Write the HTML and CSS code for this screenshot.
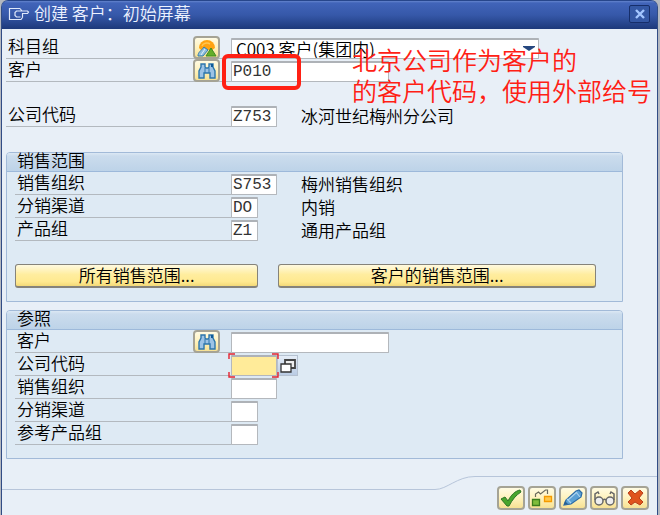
FILE: index.html
```html
<!DOCTYPE html>
<html lang="zh-CN">
<head>
<meta charset="utf-8">
<title>创建 客户: 初始屏幕</title>
<link rel="stylesheet" href="styles.css">
</head>
<body>
<svg class="defs" aria-hidden="true">
  <symbol id="binoculars" viewBox="0 0 20 18">
    <path d="M4 2h4v3l1 1h2l1-1V2h4v3l2 4v7h-5v-5H7v5H2V9l2-4z" fill="#9cc3e6" stroke="#2c76ac" stroke-width="1.4"/>
    <path d="M8 6v5M12 6v5" stroke="#2c76ac"/>
    <path d="M14 2h2v3h-2z" fill="#0e5a98"/>
  </symbol>
</svg>
<div class="window">
  <header class="titlebar">
    <svg class="title-icon" viewBox="0 0 22 14" fill="none" stroke="#dfe8fa" stroke-width="1.2" aria-hidden="true">
      <path d="M12 1.500H1.500v11H13l1.500-2M12 1.500L14 4h5.500l1 1-1 1.500H14M14.500 6.500v4M14 4H8.500L7 5.500v3L8.500 10h4"/>
    </svg>
    <h1>创建 客户：初始屏幕</h1>
    <button class="close" type="button" aria-label="关闭">
      <svg viewBox="0 0 12 10"><path d="M2 1l8 8M10 1L2 9" stroke="#a3c6ff" stroke-width="2.4"/></svg>
    </button>
  </header>

  <main>
    <section class="top">
      <div class="row">
        <div class="name"><label for="group">科目组</label>
          <button class="icon-btn" type="button" aria-label="科目组概览">
            <svg viewBox="0 0 20 18">
              <path d="M2 9a8 8 0 0 1 16 0l-3 2H4z" fill="#ffa311"/>
              <path d="M5 7a5 4 0 0 1 8-2" fill="none" stroke="#ffc650" stroke-width="1.5"/>
              <path d="M1 17c0-4 3-5 6-9l4 3-5 6z" fill="#8fbddd" stroke="#337da9"/>
              <path d="M4 16l4-6" stroke="#e0f0fa"/>
              <path d="M9 17l5-8 5 8z" fill="#65ae29" stroke="#3d8c23"/>
            </svg>
          </button>
        </div>
        <div class="select-box">
          <select id="group"><option>C003 客户(集团内)</option></select>
          <svg viewBox="0 0 12 6" aria-hidden="true"><path d="M0 0h12v1L6 5 0 1z" fill="#26477f"/></svg>
        </div>
      </div>
      <div class="row">
        <div class="name"><label for="customer">客户</label>
          <button class="icon-btn" type="button" aria-label="查找客户"><svg><use href="#binoculars"/></svg></button>
        </div>
        <div class="marked"><input id="customer" class="wide" value="P010"></div>
      </div>
      <div class="row spaced">
        <div class="name"><label for="company">公司代码</label></div>
        <input id="company" class="four" value="Z753">
        <span class="desc">冰河世纪梅州分公司</span>
      </div>
      <p class="note">北京公司作为客户的<br>的客户代码，使用外部给号</p>
    </section>

    <section class="panel">
      <h2>销售范围</h2>
      <div class="row">
        <div class="name"><label for="org">销售组织</label></div>
        <input id="org" class="four" value="S753">
        <span class="desc">梅州销售组织</span>
      </div>
      <div class="row">
        <div class="name"><label for="channel">分销渠道</label></div>
        <input id="channel" class="two" value="DO">
        <span class="desc">内销</span>
      </div>
      <div class="row">
        <div class="name"><label for="division">产品组</label></div>
        <input id="division" class="two" value="Z1">
        <span class="desc">通用产品组</span>
      </div>
      <div class="actions">
        <button type="button">所有销售范围...</button>
        <button type="button">客户的销售范围...</button>
      </div>
    </section>

    <section class="panel">
      <h2>参照</h2>
      <div class="row">
        <div class="name"><label for="ref-customer">客户</label>
          <button class="icon-btn" type="button" aria-label="查找参照客户"><svg><use href="#binoculars"/></svg></button>
        </div>
        <input id="ref-customer" class="wide">
      </div>
      <div class="row">
        <div class="name"><label for="ref-company">公司代码</label></div>
        <div class="focused">
          <input id="ref-company" class="four">
          <svg class="corners" viewBox="0 0 51 25" fill="none" stroke="#e5232f" stroke-width="1.4" aria-hidden="true">
            <path d="M1 6V1h6M44 1h6v5M50 19v5h-6M7 24H1v-5"/>
          </svg>
        </div>
        <button class="match" type="button" aria-label="选择公司代码">
          <svg viewBox="0 0 16 14"><path d="M5 1h10v8H5z" fill="#eee" stroke="#444" stroke-width="1.8"/><path d="M1 5h10v8H1z" fill="#fff" stroke="#333" stroke-width="1.3"/></svg>
        </button>
      </div>
      <div class="row">
        <div class="name"><label for="ref-org">销售组织</label></div>
        <input id="ref-org" class="four">
      </div>
      <div class="row">
        <div class="name"><label for="ref-channel">分销渠道</label></div>
        <input id="ref-channel" class="two">
      </div>
      <div class="row">
        <div class="name"><label for="ref-division">参考产品组</label></div>
        <input id="ref-division" class="two">
      </div>
    </section>
  </main>

  <footer>
    <div class="line-low"></div>
    <svg class="curve" viewBox="0 0 40 14" fill="none" stroke="#b7c5da" aria-hidden="true"><path d="M0 13.500C12 13.500 22 .5 40 .5"/></svg>
    <div class="tools">
      <button class="tool" type="button" aria-label="确认">
        <svg viewBox="0 0 24 20"><path d="M2 11l4-2 3 4C12 7 16 3 21 2l1 2C17 7 13 12 10 18H8z" fill="#49a52c" stroke="#2f7527"/></svg>
      </button>
      <button class="tool" type="button" aria-label="销售范围">
        <svg viewBox="0 0 24 20"><path d="M2.500 11.500h7v6h-7z" fill="#7fbd3a" stroke="#3c7d1c" stroke-width="1.300"/><path d="M14.500 8.500h7v5h-7z" fill="#ffc84a" stroke="#f59a00" stroke-width="1.300"/><path d="M5.500 9V6l3-2 2 2 5-4h2v4" fill="none" stroke="#6a6a5c" stroke-width="1.200"/></svg>
      </button>
      <button class="tool" type="button" aria-label="编辑">
        <svg viewBox="0 0 24 20"><path d="M3 17l2-5L15 3l3-1 3 3-1 4-10 7z" fill="#5aa0d4" stroke="#2c6ba6" stroke-width="1.200"/><path d="M7 12l9-8M15 4l4 5M6 11l4 4" stroke="#a9d2ee" stroke-width="1.200"/><path d="M3 17l1-4 3 3z" fill="#295f91"/></svg>
      </button>
      <button class="tool" type="button" aria-label="显示">
        <svg viewBox="0 0 24 20" fill="none" stroke="#666" stroke-width="1.500"><circle cx="7" cy="13" r="4" fill="#eee"/><circle cx="18" cy="13" r="4" fill="#eee"/><path d="M11 12q1.500-1.500 3 0M3 12V6l3-2 1 2M22 12V6l-3-2-1 2"/></svg>
      </button>
      <button class="tool" type="button" aria-label="取消">
        <svg viewBox="0 0 24 20"><path d="M5 5l3-3 4 4 5-4 3 3-4 5 4 4-3 3-5-3-4 3-3-3 4-4z" fill="#e0541d" stroke="#b8401a"/></svg>
      </button>
    </div>
  </footer>
</div>
</body>
</html>
```
FILE: styles.css
```css
*, *::after { box-sizing: border-box; }

body {
  margin: 0;
  background: #b4b8c0;
  color: #000;
  font: 350 17px/20px "Noto Sans CJK SC", sans-serif;
}

h1, h2, p { margin: 0; font-weight: 350; }
button, input, select { margin: 0; padding: 0; font: inherit; color: inherit; }
svg { display: block; }
.defs { position: absolute; width: 0; height: 0; }

.window {
  display: flex;
  flex-direction: column;
  min-height: 100vh;
  margin: 0 2px 0 1px;
  border: solid #314c85;
  border-width: 0 1px;
  border-radius: 7px 7px 0 0;
  background: #e8eff7;
}

.titlebar {
  display: flex;
  align-items: center;
  height: 29px;
  padding: 0 7px 2px 6px;
  border-top: 1px solid #27468b;
  border-radius: 6px 6px 0 0;
  background: linear-gradient(#6484cd 0, #4164b9 2px, #3658a9 50%, #1d397a 100%);
  color: #edf2ff;
}
.titlebar h1 { flex: 1; padding-bottom: 2px; font-size: 17px; line-height: 20px; }
.title-icon { width: 22px; height: 14px; margin-right: 4px; }
.close {
  display: grid;
  place-items: center;
  width: 21px;
  height: 18px;
  border: 1px solid #162e6a;
  border-radius: 2px;
  background: #3458a5;
}
.close svg { width: 12px; height: 10px; }

main { display: grid; gap: 8px; padding: 7px 34px 0 4px; }
.top { position: relative; padding-bottom: 17px; }

.row { display: flex; align-items: flex-end; height: 23px; }
.row.spaced { margin-top: 22px; }
.name {
  display: flex;
  justify-content: space-between;
  flex: none;
  width: 225px;
  height: 23px;
  padding: 0 11px 0 2px;
  border-bottom: 1px solid #b3b9bf;
}
.panel .name { width: 216px; }

input, select {
  height: 21px;
  border: 1px solid #b4b8bd;
  border-top: 2px solid #aeb2b7;
  border-radius: 1px;
  background: #fff;
}
input { display: block; padding-left: 1px; font: 16px/18px "Liberation Mono", monospace; color: #333; }
.four { width: 46px; }
.two { width: 27px; }
.wide { width: 158px; }
.desc { margin-left: 24px; padding-bottom: 1px; }
.two + .desc { margin-left: 43px; }

.select-box { position: relative; flex: 0 1 308px; }
select {
  display: block;
  width: 100%;
  padding-left: 4px;
  appearance: none;
  font: 350 17px/18px "Noto Sans CJK SC", sans-serif;
}
.select-box svg { position: absolute; right: 4px; top: 8px; width: 12px; height: 6px; }

.icon-btn, .tool {
  display: grid;
  place-items: center;
  flex: none;
  border: 2px solid #a5a395;
  border-radius: 4px;
  background: linear-gradient(#fffbe3, #fff2bd 50%, #f7e193);
}
.icon-btn { width: 27px; height: 23px; }
.icon-btn svg { width: 20px; height: 18px; }

.marked { position: relative; }
.marked::after {
  content: "";
  position: absolute;
  left: -9px;
  top: -7px;
  width: 79px;
  height: 36px;
  border: 4px solid #ff2014;
  border-radius: 6px;
}
.note {
  position: absolute;
  left: 346px;
  top: 8px;
  color: #ff2014;
  font-size: 25px;
  line-height: 31px;
  white-space: nowrap;
}

.panel {
  padding: 0 26px 13px 8px;
  border: 1px solid #a2bad8;
  border-radius: 4px 4px 0 0;
  background: #deeaf4;
}
.panel h2 {
  height: 19px;
  margin: 0 -26px 0 -8px;
  padding-left: 10px;
  border-bottom: 1px solid #9db9da;
  border-radius: 3px 3px 0 0;
  background: linear-gradient(#dce8f4 0, #cbdced 3px, #bdd3e8 100%);
  font-size: 17px;
  line-height: 14px;
}

.actions { display: flex; gap: 20px; margin-top: 23px; }
.actions button {
  flex: 243 1 0;
  height: 24px;
  padding-bottom: 3px;
  border: 1px solid #85837a;
  border-bottom-width: 2px;
  border-radius: 3px;
  background: linear-gradient(#fffae0, #ffed9f 45%, #ffe98f 80%, #f3d978);
  line-height: 17px;
}
.actions button + button { flex-grow: 318; }

.focused { position: relative; }
.focused input { background: #ffeb99; }
.corners { position: absolute; left: -3px; top: -2px; width: 51px; height: 25px; }
.match {
  display: grid;
  place-items: center;
  width: 21px;
  height: 21px;
  border: 1px solid #b5c1d0;
  background: linear-gradient(#e5edf7, #bacce4);
}
.match svg { width: 16px; height: 14px; }

footer { display: flex; align-items: flex-start; margin-top: 17px; }
.line-low { flex: 1; margin-top: 13px; border-top: 1px solid #b7c5da; }
.curve { width: 40px; height: 14px; }
.tools {
  display: flex;
  gap: 3px;
  padding: 9px 8px 4px 22px;
  border-top: 1px solid #b7c5da;
}
.tool { width: 28px; height: 24px; }
.tool svg { width: 24px; height: 20px; }
```
